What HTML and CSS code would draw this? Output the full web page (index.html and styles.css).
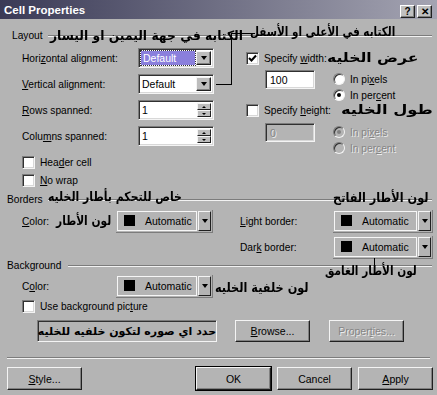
FILE: index.html
```html
<!DOCTYPE html>
<html>
<head>
<meta charset="utf-8">
<link rel="stylesheet" href="styles.css">
</head>
<body>
<div class="window">
  <div class="titlebar">
    <span class="title">Cell Properties</span>
    <div class="tb-buttons"><span class="tbtn">?</span><span class="tbtn">✕</span></div>
  </div>

  <div class="group-head layout-head"><span class="gh-label">Layout</span><span class="rule"></span></div>
  <div class="layout-body">
    <div class="col-left">
      <div class="row"><span class="lbl">Hori<u>z</u>ontal alignment:</span><div class="select"><span class="val"><span class="sel-focus">Default</span></span><span class="arrow"><i class="tri"></i></span></div></div>
      <div class="row"><span class="lbl"><u>V</u>ertical alignment:</span><div class="select"><span class="val">Default</span><span class="arrow"><i class="tri"></i></span></div></div>
      <div class="row"><span class="lbl"><u>R</u>ows spanned:</span><div class="spin"><span class="val">1</span><span class="spin-btns"><span class="sb"><i class="tri-up"></i></span><span class="sb"><i class="tri-dn"></i></span></span></div></div>
      <div class="row"><span class="lbl">Colu<u>m</u>ns spanned:</span><div class="spin"><span class="val">1</span><span class="spin-btns"><span class="sb"><i class="tri-up"></i></span><span class="sb"><i class="tri-dn"></i></span></span></div></div>
      <div class="checks">
        <div class="chk"><span class="cb"></span><span>Hea<u>d</u>er cell</span></div>
        <div class="chk"><span class="cb"></span><span><u>N</u>o wrap</span></div>
      </div>
    </div>
    <div class="col-right">
      <div class="chk spec"><span class="cb"><svg width="9" height="9" viewBox="0 0 9 9"><polyline points="1,4 3.5,6.5 8,1.5" fill="none" stroke="#000" stroke-width="2"/></svg></span><span>Specify <u>w</u>idth:</span></div>
      <div class="size-row">
        <div class="field">100</div>
        <div class="radios">
          <div class="radio-row"><span class="rb"></span><span>In pi<u>x</u>els</span></div>
          <div class="radio-row"><span class="rb on"></span><span>In per<u>c</u>ent</span></div>
        </div>
      </div>
      <div class="chk spec spec-h"><span class="cb"></span><span>Specify <u>h</u>eight:</span></div>
      <div class="size-row size-row-h disabled">
        <div class="field">0</div>
        <div class="radios">
          <div class="radio-row"><span class="rb on"></span><span>In pi<u>x</u>els</span></div>
          <div class="radio-row"><span class="rb"></span><span>In per<u>c</u>ent</span></div>
        </div>
      </div>
    </div>
  </div>

  <div class="group-head borders-head"><span class="gh-label">Borders</span><span class="rule"></span></div>
  <div class="borders-body">
    <div class="b-left">
      <div class="crow"><span class="clbl"><u>C</u>olor:</span><div class="colorbox"><span class="cmain"><i class="swatch"></i><span>Automatic</span></span><span class="carrow"><i class="tri"></i></span></div></div>
    </div>
    <div class="b-right">
      <div class="crow"><span class="clbl wide"><u>L</u>ight border:</span><div class="colorbox cb-wide"><span class="cmain"><i class="swatch"></i><span>Automatic</span></span><span class="carrow"><i class="tri"></i></span></div></div>
      <div class="crow"><span class="clbl wide">Dar<u>k</u> border:</span><div class="colorbox cb-wide"><span class="cmain"><i class="swatch"></i><span>Automatic</span></span><span class="carrow"><i class="tri"></i></span></div></div>
    </div>
  </div>

  <div class="group-head bg-head"><span class="gh-label">Background</span><span class="rule"></span></div>
  <div class="bg-body">
    <div class="crow"><span class="clbl">C<u>o</u>lor:</span><div class="colorbox"><span class="cmain"><i class="swatch"></i><span>Automatic</span></span><span class="carrow"><i class="tri"></i></span></div></div>
    <div class="chk bg-chk"><span class="cb"></span><span>Use background pic<u>t</u>ure</span></div>
    <div class="pic-row">
      <div class="pic-field"><span class="pic-text" dir="rtl">حدد اي صوره لتكون خلفيه للخليه</span></div>
      <span class="btn browse"><span><u>B</u>rowse...</span></span>
      <span class="btn props disabled"><span>Proper<u>t</u>ies...</span></span>
    </div>
  </div>

  <div class="sep"></div>
  <div class="buttons">
    <span class="btn"><span><u>S</u>tyle...</span></span>
    <span class="btn default ok">OK</span>
    <span class="btn">Cancel</span>
    <span class="btn"><span><u>A</u>pply</span></span>
  </div>

  <div class="ann a1" dir="rtl">الكتابه في جهة اليمين او اليسار</div>
  <div class="ann a2" dir="rtl">الكتابه في الأعلى او الأسفل</div>
  <div class="ann a3" dir="rtl">عرض الخليه</div>
  <div class="ann a4" dir="rtl">طول الخليه</div>
  <div class="ann a5" dir="rtl">خاص للتحكم بأطار الخليه</div>
  <div class="ann a6" dir="rtl">لون الأطار الفاتح</div>
  <div class="ann a7" dir="rtl">لون الأطار</div>
  <div class="ann a8" dir="rtl">لون الأطار الغامق</div>
  <div class="ann a9" dir="rtl">لون خلفية الخليه</div>

  <i class="line l1"></i>
  <i class="line l2"></i>
  <i class="line l3"></i>
  <i class="line l4"></i>
</div>
</body>
</html>
```

FILE: styles.css
```css
* { box-sizing: border-box; }
body { margin: 0; font-family: "Liberation Sans", Arial, sans-serif; font-size: 10.2px; color: #000; }
u { text-decoration: underline; text-underline-offset: 1px; }

.window { position: relative; width: 437px; height: 395px; background: #b4b4b4; overflow: hidden; }

.titlebar { height: 19px; display: flex; align-items: center; justify-content: space-between; padding: 0 5px 0 4px; background: linear-gradient(to right, #3a3a56, #a4a4b2); color: #fff; }
.title { font-weight: bold; font-size: 11.5px; }
.tb-buttons { display: flex; gap: 2px; align-self: flex-end; margin-bottom: 1px; }
.tbtn { width: 15px; height: 13px; background: #c0c0c0; border: 1px solid; border-color: #fff #202020 #202020 #fff; box-shadow: inset -1px -1px #808080; font: bold 10px "Liberation Sans", Arial, sans-serif; color: #000; display: flex; align-items: center; justify-content: center; line-height: 1; }

.group-head { display: flex; align-items: center; height: 13px; padding-right: 5px; }
.gh-label { padding-left: 7px; padding-right: 5px; }
.layout-head { margin-top: 10px; }
.layout-head .gh-label { padding-left: 12px; }
.rule { flex: 1; height: 2px; border-top: 1px solid #7c7c7c; border-bottom: 1px solid #f2f2f2; }

.layout-body { display: flex; }
.col-left { width: 246px; padding: 6px 0 0 22px; display: flex; flex-direction: column; gap: 6px; }
.row { display: flex; align-items: center; height: 20px; }
.lbl { width: 116px; }

.select, .spin { width: 76px; height: 20px; display: flex; align-items: stretch; background: #fff; border: 1px solid; border-color: #7c7c7c #f4f4f4 #f4f4f4 #7c7c7c; box-shadow: inset 1px 1px #303030, inset -1px -1px #d8d8d8; padding: 2px; font-size: 10.5px; }
.val { flex: 1; display: flex; align-items: center; padding-left: 1px; }
.sel-focus { background: #8a7fdc; color: #fff; outline: 1px dotted #333; padding: 1px 2px; margin-left: -1px; width: 100%; }
.arrow { width: 15px; background: #bdbdbd; border: 1px solid; border-color: #f4f4f4 #202020 #202020 #f4f4f4; box-shadow: inset -1px -1px #808080; display: flex; align-items: center; justify-content: center; }
.tri { width: 0; height: 0; border-top: 4px solid #000; border-left: 3.5px solid transparent; border-right: 3.5px solid transparent; }

.spin-btns { width: 14px; display: flex; flex-direction: column; }
.sb { flex: 1; background: #bdbdbd; border: 1px solid; border-color: #f4f4f4 #202020 #202020 #f4f4f4; display: flex; align-items: center; justify-content: center; }
.tri-up { width: 0; height: 0; border-bottom: 2px solid #000; border-left: 2px solid transparent; border-right: 2px solid transparent; }
.tri-dn { width: 0; height: 0; border-top: 2px solid #000; border-left: 2px solid transparent; border-right: 2px solid transparent; }

.checks { margin-top: 4px; display: flex; flex-direction: column; gap: 5px; }
.chk { display: flex; align-items: center; height: 13px; gap: 5px; }
.cb { width: 13px; height: 13px; background: #fff; border: 1px solid; border-color: #7c7c7c #f4f4f4 #f4f4f4 #7c7c7c; box-shadow: inset 1px 1px #303030, inset -1px -1px #d8d8d8; display: flex; align-items: center; justify-content: center; flex: none; }

.col-right { flex: 1; padding-top: 10px; display: flex; flex-direction: column; }
.size-row { display: flex; margin-top: 5px; padding-left: 19px; height: 33px; }
.spec-h { margin-top: 1px; }
.size-row-h { margin-top: 6px; }
.field { width: 50px; height: 19px; background: #fff; border: 1px solid; border-color: #7c7c7c #f4f4f4 #f4f4f4 #7c7c7c; box-shadow: inset 1px 1px #303030, inset -1px -1px #d8d8d8; padding: 2px 4px; display: flex; align-items: center; font-size: 10.5px; }
.radios { margin-left: 18px; margin-top: 1px; display: flex; flex-direction: column; }
.radio-row { height: 16px; display: flex; align-items: center; gap: 5px; }
.rb { width: 12px; height: 12px; border-radius: 50%; background: #fff; border: 1px solid; border-color: #7c7c7c #f4f4f4 #f4f4f4 #7c7c7c; box-shadow: inset 1px 1px #303030; display: flex; align-items: center; justify-content: center; }
.rb.on::after { content: ""; width: 4px; height: 4px; border-radius: 50%; background: #000; }
.disabled .rb { background: #b4b4b4; }
.disabled .rb.on::after { background: #808080; }
.disabled .field { background: #b4b4b4; }
.disabled, .btn.disabled { color: #858585; text-shadow: 1px 1px #ececec; }

.borders-head { margin-top: 6px; }
.borders-body { display: flex; margin-top: 4px; }
.b-left { width: 240px; padding-left: 22px; }
.b-right { flex: 1; display: flex; flex-direction: column; gap: 4px; }
.crow { display: flex; align-items: center; height: 22px; }
.clbl { width: 94px; }
.clbl.wide { width: 93px; }
.colorbox { width: 97px; height: 23px; display: flex; gap: 1px; padding: 1px; border-right: 1px solid #7c7c7c; border-bottom: 1px solid #7c7c7c; font-size: 10.5px; }
.cb-wide { width: 100px; }
.cmain { flex: 1; border: 1px solid #f6f6f6; display: flex; align-items: center; padding-left: 6px; gap: 10px; }
.swatch { width: 11px; height: 11px; background: #000; }
.carrow { width: 13px; background: #b4b4b4; border: 1px solid; border-color: #f4f4f4 #202020 #202020 #f4f4f4; display: flex; align-items: center; justify-content: center; }

.bg-head { margin-top: 1px; }
.bg-head .rule { margin-left: 2px; }
.bg-body { padding-left: 22px; margin-top: 3px; }
.bg-chk { margin-top: 3px; }
.pic-row { display: flex; margin-top: 7px; padding-left: 15px; height: 22px; }
.pic-field { width: 180px; height: 22px; background: #b4b4b4; border: 1px solid; border-color: #7c7c7c #f4f4f4 #f4f4f4 #7c7c7c; box-shadow: inset 1px 1px #303030; overflow: hidden; white-space: nowrap; display: flex; align-items: center; justify-content: center; }
.pic-text { font: bold 11px "DejaVu Sans", sans-serif; }
.browse { width: 62px; margin-left: 18px; }
.props { width: 74px; margin-left: 19px; }

.btn { height: 22px; width: 75px; background: #b4b4b4; border: 1px solid; border-color: #f4f4f4 #202020 #202020 #f4f4f4; box-shadow: inset -1px -1px #808080; display: flex; align-items: center; justify-content: center; flex: none; font-size: 10.5px; }
.btn.default { outline: 1px solid #000; }

.sep { margin: 15px 7px 0 7px; height: 2px; border-top: 1px solid #7c7c7c; border-bottom: 1px solid #f2f2f2; }
.buttons { display: flex; gap: 6px; padding: 0 4px 0 7px; margin-top: 8px; }
.buttons .btn { height: 23px; }
.buttons .ok { margin-left: auto; }

.ann { position: absolute; font: bold 13px "DejaVu Sans", sans-serif; line-height: 16px; white-space: nowrap; color: #000; transform-origin: left center; }
.a1 { left: 50px; top: 28px; transform: scaleX(0.95); }
.a2 { left: 250px; top: 24px; transform: scaleX(0.80); }
.a3 { left: 327px; top: 50px; transform: scaleX(1.2); }
.a4 { left: 341px; top: 102px; transform: scaleX(1.25); }
.a5 { left: 48px; top: 189px; transform: scaleX(0.84); }
.a6 { left: 333px; top: 190px; transform: scaleX(0.87); }
.a7 { left: 56px; top: 213px; transform: scaleX(0.82); }
.a8 { left: 325px; top: 263px; transform: scaleX(0.81); }
.a9 { left: 215px; top: 280px; transform: scaleX(0.87); }

.line { position: absolute; background: #000; }
.l1 { left: 216px; top: 84px; width: 16px; height: 1px; }
.l2 { left: 231px; top: 33px; width: 1px; height: 52px; }
.l3 { left: 231px; top: 33px; width: 24px; height: 1px; }
.l4 { left: 374px; top: 258px; width: 1px; height: 8px; }
```
